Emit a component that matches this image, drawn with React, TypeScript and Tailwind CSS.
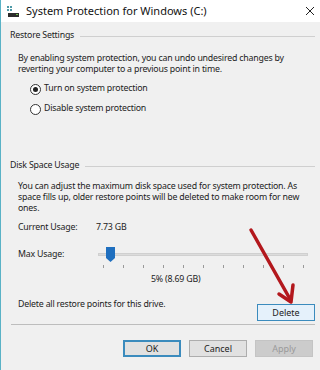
import React from 'react';

const font = { fontFamily: '"Noto Sans", "Segoe UI", sans-serif' };
const txt = 'text-[8.8px] tracking-[-0.2px] text-[#222]';

function GroupTitle({ label }: { label: string }) {
  return (
    <div className="flex items-center h-[12px] pl-[9px] pr-[5px]">
      <span className={`${txt} pr-[6px]`}>{label}</span>
      <div className="flex-1 h-px bg-[#cfcfcf]" />
    </div>
  );
}

function Radio({ checked, label }: { checked?: boolean; label: string }) {
  return (
    <div className="flex items-center h-[14px] pl-[29px] gap-[3px]">
      <span className="w-[11px] h-[11px] rounded-full border border-[#333] bg-white flex items-center justify-center">
        {checked && <span className="w-[5px] h-[5px] rounded-full bg-[#222]" />}
      </span>
      <span className={txt}>{label}</span>
    </div>
  );
}

function WinButton({ children, kind }: { children: React.ReactNode; kind?: 'default' | 'hover' | 'disabled' }) {
  const cls =
    kind === 'default'
      ? 'border-2 border-[#3b8bbd] bg-[#e1e1e1] text-[#222]'
      : kind === 'hover'
      ? 'border border-[#3b8bbd] bg-[#e5f1fb] text-[#222]'
      : kind === 'disabled'
      ? 'border border-[#c4c4c4] bg-[#cccccc] text-[#9a9a9a]'
      : 'border border-[#adadad] bg-[#e1e1e1] text-[#222]';
  return (
    <button type="button" className={`w-[58px] h-[17px] text-[9px] leading-none flex items-center justify-center ${cls}`}>
      {children}
    </button>
  );
}

export default function App() {
  const ticks = [102, 122, 142, 162, 182, 202, 222, 242, 262, 282, 302];
  return (
    <div className="relative w-[320px] h-[370px] bg-[#f0f0f0] border-l border-[#59b2c6] overflow-hidden" style={font}>
      {/* title bar */}
      <div className="h-[22px] bg-white flex items-center pl-[6px] pr-[3px]">
        <svg width="13" height="11" viewBox="0 0 13 11" className="mr-[6px]">
          <rect x="0" y="0" width="2" height="2" fill="#4f9aa8" />
          <rect x="3" y="0" width="2" height="2" fill="#4f9aa8" />
          <rect x="0" y="3" width="2" height="2" fill="#4f9aa8" />
          <rect x="3" y="3" width="2" height="2" fill="#4f9aa8" />
          <rect x="1" y="7" width="11" height="4" fill="#2b2b2b" />
          <rect x="9" y="8" width="2" height="1" fill="#6cc04a" />
        </svg>
        <span className="text-[11px] text-[#111]">System Protection for Windows (C:)</span>
        <svg width="10" height="10" viewBox="0 0 10 10" className="ml-auto mr-[2px]">
          <path d="M1 1 L9 9 M9 1 L1 9" stroke="#222" strokeWidth="1" />
        </svg>
      </div>

      <div className="pt-[8px]">
        <GroupTitle label="Restore Settings" />
        <p className={`mt-[11px] pl-[17px] pr-[20px] leading-[11px] ${txt}`}>
          By enabling system protection, you can undo undesired changes by reverting your computer to a previous point in time.
        </p>
        <div className="mt-[7px]">
          <Radio checked label="Turn on system protection" />
        </div>
        <div className="mt-[6px]">
          <Radio label="Disable system protection" />
        </div>

        <div className="mt-[44px]">
          <GroupTitle label="Disk Space Usage" />
        </div>
        <p className={`mt-[9px] pl-[17px] pr-[12px] leading-[11px] ${txt}`}>
          You can adjust the maximum disk space used for system protection. As space fills up, older restore points will be deleted to make room for new ones.
        </p>
        <div className={`mt-[8px] flex items-center h-[12px] pl-[17px] ${txt}`}>
          <span className="w-[78px]">Current Usage:</span>
          <span>7.73 GB</span>
        </div>

        {/* slider */}
        <div className="mt-[12px] flex items-start h-[26px] pl-[17px]">
          <span className={`w-[80px] leading-[12px] mt-[2px] ${txt}`}>Max Usage:</span>
          <div className="relative w-[210px] h-[26px]">
            <div className="absolute left-0 right-0 top-[7px] h-[3px] bg-[#dcdcdc] border border-[#d0d0d0]" />
            <svg width="9" height="15" viewBox="0 0 9 15" className="absolute left-[8px] top-[1px]">
              <path d="M0 0 H9 V11 L4.5 15 L0 11 Z" fill="#1f6fbf" />
            </svg>
            {ticks.map((t) => (
              <div key={t} className="absolute top-[19px] w-px h-[3px] bg-[#9a9a9a]" style={{ left: t - 97 }} />
            ))}
          </div>
        </div>
        <div className={`mt-[1px] pl-[150px] h-[12px] leading-[12px] ${txt}`}>5% (8.69 GB)</div>

        <div className="mt-[13px] flex items-start pl-[17px] pr-[5px]">
          <span className={`leading-[12px] ${txt}`}>Delete all restore points for this drive.</span>
          <div className="ml-auto mt-[6px]">
            <WinButton kind="hover">Delete</WinButton>
          </div>
        </div>

        <div className="mt-[3px] ml-[10px] mr-[5px] h-px bg-[#bdbdbd]" />

        <div className="mt-[15px] flex justify-end gap-[8px] pr-[7px]">
          <WinButton kind="default">OK</WinButton>
          <WinButton>Cancel</WinButton>
          <WinButton kind="disabled">Apply</WinButton>
        </div>
      </div>

      {/* red annotation arrow */}
      <svg className="absolute left-0 top-0 pointer-events-none" width="320" height="370" viewBox="0 0 320 370">
        <path d="M250 230 L289 299" stroke="#b3181d" strokeWidth="3.5" strokeLinecap="round" />
        <path d="M278 294 L290 302 L292 285" stroke="#b3181d" strokeWidth="3.5" fill="none" strokeLinecap="round" strokeLinejoin="round" />
      </svg>
    </div>
  );
}
